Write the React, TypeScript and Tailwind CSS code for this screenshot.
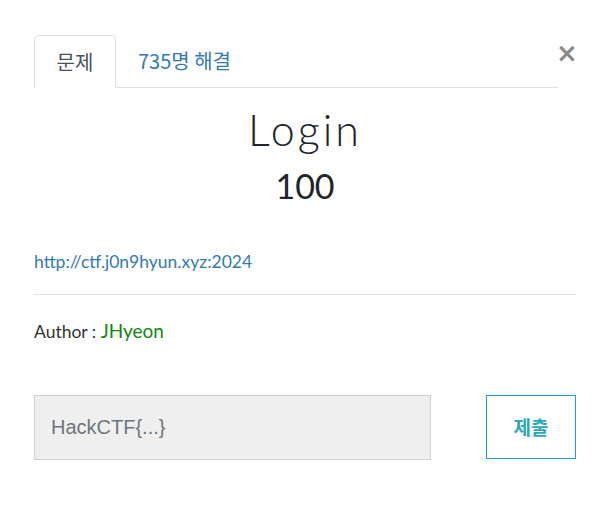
import {useState} from "react";

export default function App() {
  const [flag, setFlag] = useState("");

  return (
    <div className="w-[603px] h-[505px] bg-white relative font-['Lato','Noto_Sans_CJK_KR',sans-serif]">
      <button className="absolute left-[556px] top-[40px] text-[26px] leading-none text-[#8a8a8a] font-bold font-['DejaVu_Sans',sans-serif]">
        ×
      </button>
      <div className="pt-[35px] px-[34px]">
        <div className="flex w-[524px] border-b border-[#dee2e6] h-[53px]">
          <div className="w-[82px] -mb-px h-[53px] border border-[#dee2e6] border-b-white rounded-t-[5px] flex items-center justify-center text-[20px] text-[#495057] font-['Noto_Sans_CJK_KR',sans-serif] bg-white">
            문제
          </div>
          <div className="pl-[22px] flex items-center text-[20px] text-[#337ab7] font-['Noto_Sans_CJK_KR',sans-serif]">
            735명 해결
          </div>
        </div>

        <div className="flex flex-col items-center w-[542px]">
          <h1 className="mt-[17px] text-[43px] leading-[50px] font-light tracking-[0.07em] text-[#212529]">Login</h1>
          <h2 className="mt-[10px] text-[34px] leading-[42px] text-[#212529]">100</h2>
        </div>

        <a href="#" className="block mt-[44px] text-[17.5px] leading-[22px] text-[#337ab7]">
          http://ctf.j0n9hyun.xyz:2024
        </a>
        <hr className="mt-[21px] w-[542px] border-[#e2e2e2]" />
        <p className="mt-[25px] text-[17.5px] leading-[22px] text-[#333]">
          Author : <span className="text-[#11880f] text-[19px]">JHyeon</span>
        </p>

        <div className="mt-[52px] flex items-start w-[542px] justify-between">
          <input
            value={flag}
            onChange={(e) => setFlag(e.target.value)}
            placeholder="HackCTF{...}"
            className="w-[397px] h-[65px] bg-[#efefef] border border-[#cfd2d6] px-[16px] text-[20px] font-['Liberation_Sans',sans-serif] text-[#495057] placeholder:text-[#6c757d] outline-none"
          />
          <button className="w-[90px] h-[64px] border border-[#2196f3] text-[#2aa7bd] text-[19px] font-bold font-['Noto_Sans_CJK_KR',sans-serif]">
            제출
          </button>
        </div>
      </div>
    </div>
  );
}
